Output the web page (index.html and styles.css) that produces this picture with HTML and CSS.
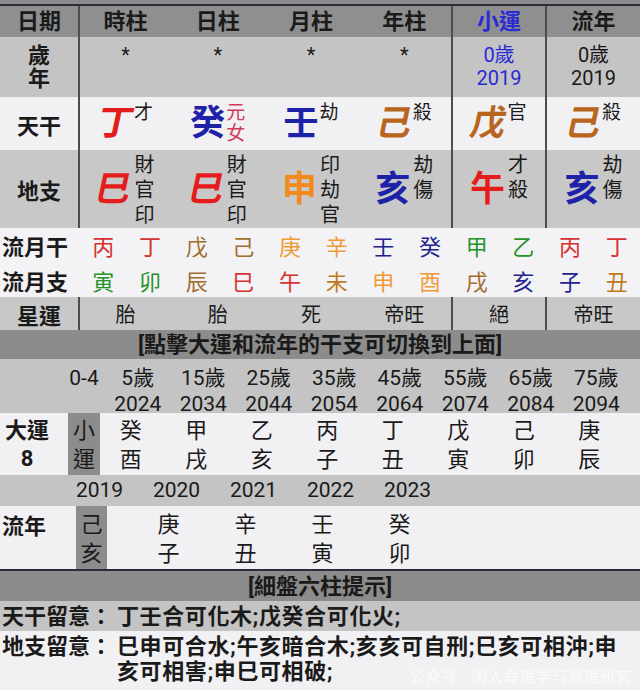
FILE: index.html
```html
<!DOCTYPE html>
<html lang="zh-Hant">
<head>
<meta charset="utf-8">
<title>八字排盤</title>
<link rel="stylesheet" href="styles.css">
</head>
<body>
<div class="page">
  <div class="top-strip"></div>

  <div class="row hdr">
    <div class="c lab">日期</div>
    <div class="c sep">時柱</div>
    <div class="c">日柱</div>
    <div class="c">月柱</div>
    <div class="c">年柱</div>
    <div class="c sep blue">小運</div>
    <div class="c sep">流年</div>
  </div>

  <div class="row age">
    <div class="c lab stack">歲<br>年</div>
    <div class="c sep star">*</div>
    <div class="c star">*</div>
    <div class="c star">*</div>
    <div class="c star">*</div>
    <div class="c sep num blue">0歲<br>2019</div>
    <div class="c sep num">0歲<br>2019</div>
  </div>

  <div class="row gan">
    <div class="c lab">天干</div>
    <div class="c sep"><span class="big it red">丁</span><span class="sup">才</span></div>
    <div class="c"><span class="big navy">癸</span><span class="sup pink">元<br>女</span></div>
    <div class="c"><span class="big navy">壬</span><span class="sup">劫</span></div>
    <div class="c"><span class="big it brown">己</span><span class="sup">殺</span></div>
    <div class="c sep"><span class="big it brown">戊</span><span class="sup">官</span></div>
    <div class="c sep"><span class="big it brown">己</span><span class="sup">殺</span></div>
  </div>

  <div class="row zhi">
    <div class="c lab">地支</div>
    <div class="c sep"><span class="big it red">巳</span><span class="subs">財<br>官<br>印</span></div>
    <div class="c"><span class="big it red">巳</span><span class="subs">財<br>官<br>印</span></div>
    <div class="c"><span class="big orange">申</span><span class="subs">印<br>劫<br>官</span></div>
    <div class="c"><span class="big navy">亥</span><span class="subs">劫<br>傷</span></div>
    <div class="c sep"><span class="big red">午</span><span class="subs">才<br>殺</span></div>
    <div class="c sep"><span class="big navy">亥</span><span class="subs">劫<br>傷</span></div>
  </div>

  <div class="month">
    <div class="mrow">
      <div class="mlab">流月干</div>
      <span class="m-red">丙</span><span class="m-red">丁</span><span class="m-brown">戊</span><span class="m-brown">己</span>
      <span class="m-orange">庚</span><span class="m-orange">辛</span><span class="m-navy">壬</span><span class="m-navy">癸</span>
      <span class="m-green">甲</span><span class="m-green">乙</span><span class="m-red">丙</span><span class="m-red">丁</span>
    </div>
    <div class="mrow">
      <div class="mlab">流月支</div>
      <span class="m-green">寅</span><span class="m-green">卯</span><span class="m-brown">辰</span><span class="m-red">巳</span>
      <span class="m-red">午</span><span class="m-ochre">未</span><span class="m-orange">申</span><span class="m-orange">酉</span>
      <span class="m-brown">戌</span><span class="m-navy">亥</span><span class="m-navy">子</span><span class="m-ochre">丑</span>
    </div>
  </div>

  <div class="row star-row">
    <div class="c lab">星運</div>
    <div class="c sep">胎</div>
    <div class="c">胎</div>
    <div class="c">死</div>
    <div class="c">帝旺</div>
    <div class="c sep">絕</div>
    <div class="c sep">帝旺</div>
  </div>

  <div class="banner">[點擊大運和流年的干支可切換到上面]</div>

  <div class="dy dy-ages">
    <div></div>
    <div class="small-age">0-4</div>
    <div class="yr">5歲<br>2024</div>
    <div class="yr">15歲<br>2034</div>
    <div class="yr">25歲<br>2044</div>
    <div class="yr">35歲<br>2054</div>
    <div class="yr">45歲<br>2064</div>
    <div class="yr">55歲<br>2074</div>
    <div class="yr">65歲<br>2084</div>
    <div class="yr">75歲<br>2094</div>
  </div>

  <div class="dy dy-chars">
    <div class="dy-lab">大運<br>8</div>
    <div class="hl">小<br>運</div>
    <div class="gz">癸<br>酉</div>
    <div class="gz">甲<br>戌</div>
    <div class="gz">乙<br>亥</div>
    <div class="gz">丙<br>子</div>
    <div class="gz">丁<br>丑</div>
    <div class="gz">戊<br>寅</div>
    <div class="gz">己<br>卯</div>
    <div class="gz">庚<br>辰</div>
  </div>

  <div class="ln ln-years">
    <div></div>
    <div class="yr1">2019</div>
    <div class="yr1">2020</div>
    <div class="yr1">2021</div>
    <div class="yr1">2022</div>
    <div class="yr1">2023</div>
  </div>

  <div class="ln ln-chars">
    <div class="ln-lab">流年</div>
    <div class="gz1"><span class="hl1">己<br>亥</span></div>
    <div class="gz1">庚<br>子</div>
    <div class="gz1">辛<br>丑</div>
    <div class="gz1">壬<br>寅</div>
    <div class="gz1">癸<br>卯</div>
  </div>

  <div class="banner banner2">[細盤六柱提示]</div>

  <div class="note note-gray">
    <div class="nl">天干留意：</div>
    <div class="nt"><span>丁壬合可化木;戊癸合可化火;</span></div>
  </div>
  <div class="note">
    <div class="nl">地支留意：</div>
    <div class="nt"><span>巳申可合水;午亥暗合木;亥亥可自刑;巳亥可相沖;申亥可相害;申巳可相破;</span></div>
  </div>
  <div class="wm">公众号 · 闲人命理学与易理研究</div>
</div>
</body>
</html>
```

FILE: styles.css
```css
* { box-sizing: border-box; margin: 0; padding: 0; }
html, body { width: 640px; height: 690px; overflow: hidden; }
body {
  font-family: Roboto, "Noto Sans CJK TC", "Noto Sans CJK SC", sans-serif;
  color: #1a1a1a;
  background: #f1f0f3;
}
.page { position: relative; width: 640px; height: 690px; overflow: hidden; }

.top-strip { height: 6px; background: #8c8c8c; border-bottom: 2px solid #2b2b3a; }

.row {
  display: grid;
  grid-template-columns: 78px 93px 93.5px 93px 93.5px 94px 95px;
}
.c { display: flex; justify-content: center; align-items: center; text-align: center; }
.sep { border-left: 2px solid #4d4d4d; }
.lab { font-weight: 700; font-size: 22px; }

.hdr { height: 31px; background: #8f8f8f; font-weight: 700; font-size: 22px; }
.hdr .c { line-height: 31px; }
.blue { color: #2a2ad6; }

.age { height: 60px; background: #c4c4c4; }
.age .stack { line-height: 23px; }
.age .star { align-items: flex-start; font-size: 20px; padding-top: 6px; line-height: 24px; }
.age .num { align-items: flex-start; font-size: 20px; line-height: 23px; padding-top: 7px; }

.gan { height: 53px; background: #f1f0f3; }
.big { font-size: 35px; font-weight: 700; line-height: 1; display: inline-block; }
.it { transform: skewX(-12deg); }
.gan .sup { align-self: flex-start; margin-top: 5px; font-size: 19px; line-height: 21px; margin-left: 1px; }
.red { color: #e41c1c; }
.navy { color: #1e22a8; }
.brown { color: #b8661e; }
.orange { color: #f28a1e; }
.pink { color: #d23a5a; }

.zhi { height: 78px; background: #c8c8c8; }
.zhi .subs { align-self: flex-start; margin-top: 3px; font-size: 20px; line-height: 25px; margin-left: 3px; }

.month { background: #f3f2f5; }
.mrow {
  display: grid;
  grid-template-columns: 80px repeat(12, 1fr);
  height: 34.5px;
  align-items: center;
  font-size: 22px;
  text-align: center;
}
.mlab { font-weight: 700; font-size: 22px; text-align: left; padding-left: 2px; }
.m-red { color: #d63232; }
.m-brown { color: #a26e2e; }
.m-orange { color: #f09a36; }
.m-ochre { color: #c07a20; }
.m-navy { color: #23238e; }
.m-green { color: #26922a; }

.star-row { height: 33px; background: #c8c8c8; font-size: 20px; }

.banner {
  height: 29px;
  background: #8c8c8c;
  font-weight: 700;
  font-size: 22px;
  line-height: 29px;
  text-align: center;
}
.banner2 { height: 32px; line-height: 32px; border-top: 2px solid #2b2b3a; }

.dy { display: grid; grid-template-columns: 68px 37px repeat(8, 65.5px); }
.dy-ages { height: 54px; background: #c4c4c4; font-size: 21px; line-height: 26px; padding-top: 6px; }
.small-age { width: 32px; text-align: center; white-space: nowrap; display: flex; justify-content: center; }
.yr { text-align: center; }
.dy-chars { height: 62px; background: #f1f0f3; font-size: 22px; line-height: 29px; }
.dy-lab { font-weight: 700; text-align: center; padding-right: 14px; padding-top: 4px; line-height: 28px; }
.hl { width: 32px; background: #8c8c8c; text-align: center; padding-top: 3px; }
.gz { text-align: center; padding-right: 14px; padding-top: 3px; }

.ln { display: grid; grid-template-columns: 61px repeat(5, 77px); }
.ln-years { height: 31px; background: #c4c4c4; font-size: 21px; line-height: 31px; }
.yr1 { text-align: center; }
.ln-chars { height: 63px; background: #f1f0f3; font-size: 22px; line-height: 29px; }
.ln-lab { font-weight: 700; padding-left: 2px; padding-top: 6px; }
.gz1 { text-align: center; padding-right: 16px; padding-top: 4px; }
.hl1 { display: inline-block; width: 31px; height: 63px; margin-top: -4px; padding-top: 4px; background: #8c8c8c; }

.note { display: flex; font-weight: 700; font-size: 22px; line-height: 25px; padding: 3px 0 0 2px; }
.note-gray { background: #c4c4c4; height: 30px; }
.nl { flex: none; width: 115px; }
.nt { flex: 1; letter-spacing: 0.6px; padding-right: 14px; }

.wm {
  position: absolute;
  right: 8px;
  bottom: 5px;
  color: rgba(255, 255, 255, 0.8);
  font-size: 15px;
  line-height: 16px;
  letter-spacing: 1px;
}
```
